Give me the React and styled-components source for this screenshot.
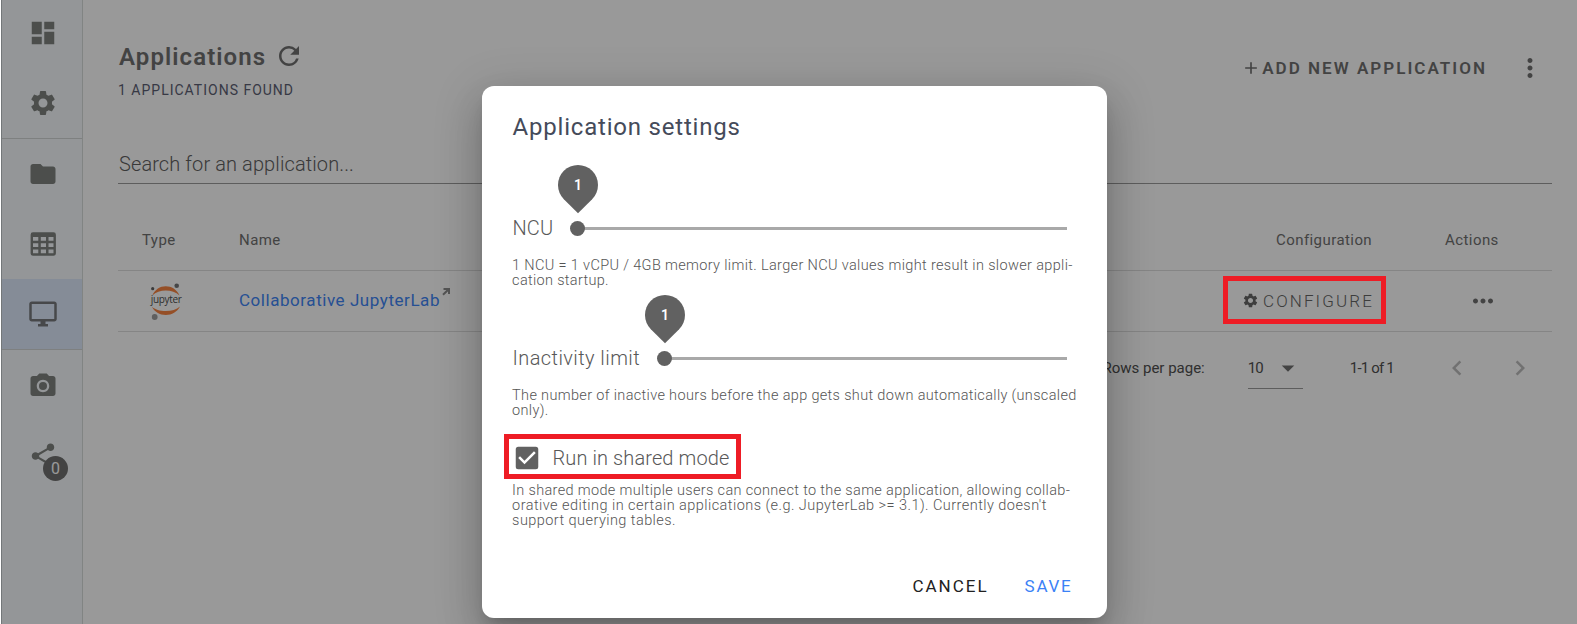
import React from 'react';
import styled, { createGlobalStyle } from 'styled-components';
import {
  MdDashboard, MdSettings, MdFolder, MdOutlineDesktopWindows, MdCameraAlt, MdShare, MdRefresh,
  MdMoreVert, MdMoreHoriz, MdArrowDropDown, MdChevronLeft, MdChevronRight, MdCheckBox, MdAdd,
} from 'react-icons/md';

const GlobalStyle = createGlobalStyle`
  * { box-sizing: border-box; }
  body {
    margin: 0;
    background: #fff;
    font-family: Roboto, "Open Sans", sans-serif;
    overflow: hidden;
  }
  svg { display: block; flex: none; }
`;

const Page = styled.div`
  position: relative;
  display: flex;
  height: 624px;
  padding-left: 1px;
  overflow: hidden;
`;

/* Sidebar */
const Sidebar = styled.nav`
  width: 82px;
  flex: none;
  background: #f7fbfe;
  border-left: 1px solid #c0c6ca;
  border-right: 1px solid #d8dcda;
  color: #7f827f;
`;
const NavItem = styled.div`
  display: flex;
  align-items: center;
  justify-content: center;
  height: ${(p) => p.$height || 70}px;
  padding: 0 0 ${(p) => p.$lift || 0}px 2px;
  box-sizing: content-box;
  background: ${(p) => (p.$active ? '#deeafc' : 'transparent')};
  color: ${(p) => (p.$active ? '#77787c' : 'inherit')};
  border-bottom: ${(p) => (p.$divider ? '1px solid #d2d6d6' : 'none')};
`;
const BadgeAnchor = styled.div`
  position: relative;
`;
const Badge = styled.span`
  position: absolute;
  left: 15px;
  top: 15px;
  width: 25px;
  height: 25px;
  border-radius: 50%;
  background: #707070;
  color: #fff;
  font-size: 16px;
  line-height: 25px;
  text-align: center;
`;

/* Main column */
const Main = styled.main`
  flex: 1;
  padding: 0 25px 0 35px;
`;
const Header = styled.header`
  display: flex;
  justify-content: space-between;
  height: 143px;
  color: #707070;
`;
const TitleRow = styled.div`
  display: flex;
  align-items: center;
  gap: 8px;
  height: 30px;
  margin-top: 41px;
`;
const Title = styled.h1`
  margin: 2px 0 0 1px;
  font-size: 24px;
  font-weight: 600;
  letter-spacing: 1.08px;
  line-height: 30px;
`;
const Count = styled.div`
  margin-top: 9px;
  font-size: 14px;
  line-height: 20px;
  letter-spacing: 1px;
  color: #5c6074;
`;
const HeaderActions = styled.div`
  display: flex;
  align-items: center;
  height: 30px;
  margin: 53px 7px 0 0;
`;
const AddButton = styled.div`
  display: flex;
  align-items: center;
  gap: 1px;
  margin-right: 28px;
  font-size: 17px;
  font-weight: 600;
  letter-spacing: 2.03px;
`;
const SearchField = styled.div`
  height: 41px;
  padding: 1px 0 0 1px;
  border-bottom: 1px solid #9c9c9c;
  font-size: 20px;
  font-weight: 300;
  line-height: 40px;
  letter-spacing: 0.1px;
  color: #606060;
`;

/* Table */
const TableRow = styled.div`
  display: grid;
  grid-template-columns: 121px 984px 171px 1fr;
  align-items: center;
  height: ${(p) => p.$height}px;
  padding-top: ${(p) => p.$drop || 0}px;
  border-bottom: 1px solid #dedede;
`;
const HeadCell = styled.div`
  padding-left: ${(p) => p.$indent || 0}px;
  font-size: 15px;
  font-weight: 450;
  letter-spacing: 0.43px;
  color: #707070;
`;
const LogoCell = styled.div`
  padding-left: 31px;
`;
const AppLink = styled.div`
  display: flex;
  margin-top: -2px;
  font-size: 17px;
  letter-spacing: 0.55px;
  line-height: 20px;
  color: #4085f6;
  svg { margin: -3px 0 0 2px; }
`;
const ConfigureCell = styled.div`
  position: relative;
  display: flex;
  align-items: center;
  gap: 4px;
  margin-top: -1px;
  padding-left: 19px;
  color: #666;
  font-size: 17px;
  font-weight: 350;
  letter-spacing: 2.1px;
`;
const ConfigureHighlight = styled.div`
  position: absolute;
  z-index: 20;
  left: 0;
  top: 50%;
  width: 163px;
  height: 48px;
  margin-top: -25px;
  border: 5px solid #ee1c25;
`;
const ActionCell = styled.div`
  padding-left: 74px;
  color: #707070;
`;

/* Pager */
const Pager = styled.div`
  display: flex;
  align-items: center;
  justify-content: flex-end;
  height: 72px;
  padding-right: 17px;
  font-size: 15px;
  color: #505050;
`;
const PageSize = styled.div`
  display: flex;
  align-items: center;
  justify-content: space-between;
  width: 55px;
  height: 42px;
  margin: 0 47px 0 43px;
  border-bottom: 1px solid #9c9c9c;
  letter-spacing: -0.9px;
  svg { color: #707070; }
`;
const PageRange = styled.div`
  margin-right: 48px;
  letter-spacing: -0.8px;
`;
const PagerArrows = styled.div`
  display: flex;
  gap: 33px;
  color: #bdbdbd;
`;

/* Dialog */
const Overlay = styled.div`
  position: absolute;
  z-index: 10;
  inset: 0 0 0 1px;
  display: flex;
  justify-content: center;
  align-items: flex-start;
  padding: 86px 0 0 10px;
  background: rgba(0, 0, 0, 0.4);
`;
const Dialog = styled.div`
  width: 625px;
  height: 532px;
  padding: 26px 30px 0;
  border-radius: 12px;
  background: #fff;
  box-shadow: 0 11px 15px -7px rgba(0, 0, 0, 0.2), 0 24px 38px 3px rgba(0, 0, 0, 0.14),
    0 9px 46px 8px rgba(0, 0, 0, 0.12);
`;
const DialogTitle = styled.h2`
  margin: 0 0 71px 1px;
  font-size: 24px;
  font-weight: 400;
  line-height: 30px;
  letter-spacing: 0.8px;
  color: #454b5a;
`;
const SliderRow = styled.div`
  display: flex;
  align-items: center;
  gap: 24px;
  height: 30px;
  margin: 0 10px 0 1px;
`;
const FieldLabel = styled.span`
  font-size: 20px;
  font-weight: 300;
  letter-spacing: ${(p) => p.$spacing}px;
  color: #585858;
`;
const Track = styled.div`
  position: relative;
  flex: 1;
  height: 3px;
  background: #a9a9a9;
`;
const Thumb = styled.div`
  position: absolute;
  left: -7px;
  top: -6px;
  width: 15px;
  height: 15px;
  border-radius: 50%;
  background: #616161;
`;
const Balloon = styled.div`
  position: absolute;
  left: -19px;
  top: -62px;
  width: 40px;
  height: 40px;
  border-radius: 50% 50% 0 50%;
  background: #616161;
  transform: rotate(45deg);
`;
const BalloonValue = styled.span`
  display: block;
  transform: rotate(-45deg);
  color: #fff;
  font-size: 14px;
  font-weight: 600;
  line-height: 40px;
  text-align: center;
`;
const Hint = styled.div`
  margin: ${(p) => p.$before}px 0 ${(p) => p.$after}px 0.6px;
  font-size: 14.5px;
  font-weight: 300;
  line-height: 15px;
  white-space: nowrap;
  color: #555;
`;
const HintLine = styled.div`
  letter-spacing: ${(p) => p.$spacing}px;
`;
const CheckRow = styled.div`
  position: relative;
  display: flex;
  align-items: center;
  gap: 11px;
  height: 30px;
  color: #616161;
`;
const CheckHighlight = styled.div`
  position: absolute;
  left: -8px;
  top: -9px;
  width: 237px;
  height: 45px;
  border: 5px solid #ee1c25;
`;
const DialogActions = styled.div`
  display: flex;
  justify-content: flex-end;
  gap: 36px;
  padding-right: 4px;
`;
const DialogButton = styled.div`
  font-size: 17px;
  line-height: 30px;
  letter-spacing: ${(p) => p.$spacing}px;
  color: ${(p) => (p.$primary ? '#3b82f6' : '#212121')};
`;

const TableIcon = () => (
  <svg width="30" height="30" viewBox="0 0 30 30" fill="currentColor" fillRule="evenodd">
    <path d="M5 3.3h20.5a2.4 2.4 0 0 1 2.4 2.4v18.7a2.4 2.4 0 0 1-2.4 2.4H5a2.4 2.4 0 0 1-2.4-2.4V5.700A2.400 2.400 0 0 1 5 3.300zM5 8.100v3.600h5.300V8.100zm7.800 0v3.600h5.200V8.100zm7.700 0v3.600h5V8.100zM5 14.200v3.700h5.300v-3.700zm7.800 0v3.700h5.200v-3.700zm7.700 0v3.700h5v-3.700zM5 20.500v3.700h5.300v-3.700zm7.800 0v3.700h5.200v-3.700zm7.700 0v3.700h5v-3.700z" />
  </svg>
);

const JupyterLogo = () => (
  <svg width="34" height="39" viewBox="0 0 34 39">
    <path d="M3.3 13.500C6 7.500 11 4.300 16.800 4.300S27.800 7.500 30.500 13.500C27 10 22 8.600 16.800 8.600S6.800 10 3.300 13.500z" fill="#f98442" />
    <path d="M2.800 24.500C6 27.800 11 29 16.800 29s10.700-1.200 14.200-4.500C28 30 23 33 16.800 33S5.600 30 2.800 24.500z" fill="#f98442" />
    <circle cx="27.700" cy="3.700" r="2.300" fill="#767677" />
    <circle cx="3.700" cy="6.700" r="1.600" fill="#616262" />
    <circle cx="5.700" cy="35" r="2.900" fill="#9e9e9e" />
    <text x="1.800" y="20.500" fontFamily="'Open Sans', sans-serif" fontSize="10" textLength="31" fill="#4e4e4e">jupyter</text>
  </svg>
);

const OpenIcon = () => (
  <svg width="9" height="9" viewBox="0 0 9 9" fill="none" stroke="#8c8c8c" strokeWidth="2">
    <path d="M1.500 2H7v5M7 2L1 7.800" />
  </svg>
);

function SliderField({ label, spacing, value }) {
  return (
    <SliderRow>
      <FieldLabel $spacing={spacing}>{label}</FieldLabel>
      <Track>
        <Thumb />
        <Balloon><BalloonValue>{value}</BalloonValue></Balloon>
      </Track>
    </SliderRow>
  );
}

export default function App() {
  return (
    <>
      <GlobalStyle />
      <Page>
        <Sidebar>
          <NavItem $height={66} $lift={2}><MdDashboard size={30} /></NavItem>
          <NavItem $divider><MdSettings size={30} /></NavItem>
          <NavItem><MdFolder size={30} /></NavItem>
          <NavItem><TableIcon /></NavItem>
          <NavItem $active $divider><MdOutlineDesktopWindows size={30} /></NavItem>
          <NavItem $height={72}><MdCameraAlt size={30} /></NavItem>
          <NavItem $height={68}>
            <BadgeAnchor>
              <MdShare size={30} />
              <Badge>0</Badge>
            </BadgeAnchor>
          </NavItem>
        </Sidebar>

        <Main>
          <Header>
            <div>
              <TitleRow>
                <Title>Applications</Title>
                <MdRefresh size={30} />
              </TitleRow>
              <Count>1 APPLICATIONS FOUND</Count>
            </div>
            <HeaderActions>
              <AddButton><MdAdd size={20} />ADD NEW APPLICATION</AddButton>
              <MdMoreVert size={30} />
            </HeaderActions>
          </Header>
          <SearchField>Search for an application...</SearchField>

          <TableRow $height={87} $drop={26}>
            <HeadCell $indent={24}>Type</HeadCell>
            <HeadCell>Name</HeadCell>
            <HeadCell $indent={53}>Configuration</HeadCell>
            <HeadCell $indent={51}>Actions</HeadCell>
          </TableRow>
          <TableRow $height={61}>
            <LogoCell><JupyterLogo /></LogoCell>
            <AppLink>Collaborative JupyterLab<OpenIcon /></AppLink>
            <ConfigureCell>
              <MdSettings size={17} />
              CONFIGURE
              <ConfigureHighlight />
            </ConfigureCell>
            <ActionCell><MdMoreHoriz size={30} /></ActionCell>
          </TableRow>

          <Pager>
            Rows per page:
            <PageSize>10<MdArrowDropDown size={30} /></PageSize>
            <PageRange>1-1 of 1</PageRange>
            <PagerArrows><MdChevronLeft size={30} /><MdChevronRight size={30} /></PagerArrows>
          </Pager>
        </Main>

        <Overlay>
          <Dialog>
            <DialogTitle>Application settings</DialogTitle>

            <SliderField label="NCU" spacing={0.1} value="1" />
            <Hint $before={15} $after={55}>
              <HintLine $spacing={0.35}>1 NCU = 1 vCPU / 4GB memory limit. Larger NCU values might result in slower appli-</HintLine>
              <HintLine $spacing={0.32}>cation startup.</HintLine>
            </Hint>

            <SliderField label="Inactivity limit" spacing={0.42} value="1" />
            <Hint $before={15} $after={25}>
              <HintLine $spacing={0.34}>The number of inactive hours before the app gets shut down automatically (unscaled</HintLine>
              <HintLine $spacing={0.32}>only).</HintLine>
            </Hint>

            <CheckRow>
              <MdCheckBox size={30} />
              <FieldLabel $spacing={0.1}>Run in shared mode</FieldLabel>
              <CheckHighlight />
            </CheckRow>
            <Hint $before={10} $after={43}>
              <HintLine $spacing={0.34}>In shared mode multiple users can connect to the same application, allowing collab-</HintLine>
              <HintLine $spacing={0.45}>orative editing in certain applications (e.g. JupyterLab &gt;= 3.1). Currently doesn't</HintLine>
              <HintLine $spacing={0.44}>support querying tables.</HintLine>
            </Hint>

            <DialogActions>
              <DialogButton $spacing={2}>CANCEL</DialogButton>
              <DialogButton $primary $spacing={1.75}>SAVE</DialogButton>
            </DialogActions>
          </Dialog>
        </Overlay>
      </Page>
    </>
  );
}
